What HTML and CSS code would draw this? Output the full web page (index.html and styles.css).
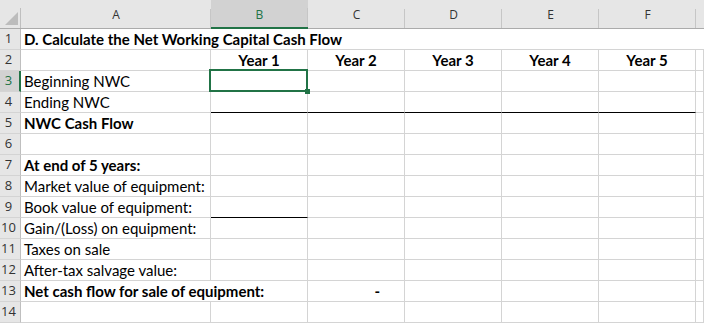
FILE: index.html
```html
<!DOCTYPE html>
<html lang="en">
<head>
    <meta charset="utf-8">
    <title>NWC Cash Flow</title>
    <link rel="stylesheet" href="styles.css">
</head>
<body>

    <div class="sheet">
        <!-- column headers -->
        <div class="hd corner">
            <svg width="13" height="13" viewBox="0 0 13 13"><polygon points="13,0 13,13 0,13" fill="#bcbcbc"/></svg>
        </div>
        <div class="hd col">A</div>
        <div class="hd col active">B</div>
        <div class="hd col">C</div>
        <div class="hd col">D</div>
        <div class="hd col">E</div>
        <div class="hd col">F</div>
        <div class="hd col last"></div>

        <!-- 1 -->
        <div class="hd row">1</div>
        <div class="c bold title">D. Calculate the Net Working Capital Cash Flow</div>

        <!-- 2 -->
        <div class="hd row">2</div>
        <div class="c"></div>
        <div class="c bold mid">Year 1</div>
        <div class="c bold mid">Year 2</div>
        <div class="c bold mid">Year 3</div>
        <div class="c bold mid">Year 4</div>
        <div class="c bold mid">Year 5</div>
        <div class="c"></div>

        <!-- 3 -->
        <div class="hd row active">3</div>
        <div class="c">Beginning NWC</div>
        <div class="c selected"></div>
        <div class="c"></div>
        <div class="c"></div>
        <div class="c"></div>
        <div class="c"></div>
        <div class="c"></div>

        <!-- 4 -->
        <div class="hd row">4</div>
        <div class="c">Ending NWC</div>
        <div class="c total"></div>
        <div class="c total"></div>
        <div class="c total"></div>
        <div class="c total"></div>
        <div class="c total"></div>
        <div class="c"></div>

        <!-- 5 -->
        <div class="hd row">5</div>
        <div class="c bold">NWC Cash Flow</div>
        <div class="c"></div>
        <div class="c"></div>
        <div class="c"></div>
        <div class="c"></div>
        <div class="c"></div>
        <div class="c"></div>

        <!-- 6 -->
        <div class="hd row">6</div>
        <div class="c"></div>
        <div class="c"></div>
        <div class="c"></div>
        <div class="c"></div>
        <div class="c"></div>
        <div class="c"></div>
        <div class="c"></div>

        <!-- 7 -->
        <div class="hd row">7</div>
        <div class="c bold">At end of 5 years:</div>
        <div class="c"></div>
        <div class="c"></div>
        <div class="c"></div>
        <div class="c"></div>
        <div class="c"></div>
        <div class="c"></div>

        <!-- 8 -->
        <div class="hd row">8</div>
        <div class="c">Market value of equipment:</div>
        <div class="c"></div>
        <div class="c"></div>
        <div class="c"></div>
        <div class="c"></div>
        <div class="c"></div>
        <div class="c"></div>

        <!-- 9 -->
        <div class="hd row">9</div>
        <div class="c">Book value of equipment:</div>
        <div class="c total"></div>
        <div class="c"></div>
        <div class="c"></div>
        <div class="c"></div>
        <div class="c"></div>
        <div class="c"></div>

        <!-- 10 -->
        <div class="hd row">10</div>
        <div class="c">Gain/(Loss) on equipment:</div>
        <div class="c"></div>
        <div class="c"></div>
        <div class="c"></div>
        <div class="c"></div>
        <div class="c"></div>
        <div class="c"></div>

        <!-- 11 -->
        <div class="hd row">11</div>
        <div class="c">Taxes on sale</div>
        <div class="c"></div>
        <div class="c"></div>
        <div class="c"></div>
        <div class="c"></div>
        <div class="c"></div>
        <div class="c"></div>

        <!-- 12 -->
        <div class="hd row">12</div>
        <div class="c">After-tax salvage value:</div>
        <div class="c"></div>
        <div class="c"></div>
        <div class="c"></div>
        <div class="c"></div>
        <div class="c"></div>
        <div class="c"></div>

        <!-- 13 -->
        <div class="hd row">13</div>
        <div class="c bold span2">Net cash flow for sale of equipment:</div>
        <div class="c bold num">-</div>
        <div class="c"></div>
        <div class="c"></div>
        <div class="c"></div>
        <div class="c"></div>

        <!-- 14 -->
        <div class="hd row">14</div>
        <div class="c"></div>
        <div class="c"></div>
        <div class="c"></div>
        <div class="c"></div>
        <div class="c"></div>
        <div class="c"></div>
        <div class="c"></div>
    </div>

</body>
</html>
```

FILE: styles.css
```css
body {
    margin: 0;
    background-color: #fff;
    overflow: hidden;
}

.sheet {
    display: grid;
    grid-template-columns: 21px 190px repeat(5, 97px) 1fr;
    grid-template-rows: 29px;
    grid-auto-rows: 21px;
    width: 704px;
    font-family: Lato, "Open Sans", sans-serif;
    font-size: 15px;
    color: #000;
}

/* headers */
.hd {
    background-color: #e6e6e6;
    color: #333;
    font-family: "Open Sans", sans-serif;
    font-size: 12px;
    box-sizing: border-box;
    display: flex;
    align-items: flex-end;
    justify-content: center;
}
.corner {
    border-bottom: 1px solid #ababab;
    background-image: linear-gradient(#bfbfbf, #bfbfbf);
    background-size: 1px 20px;
    background-position: right bottom;
    background-repeat: no-repeat;
    justify-content: flex-end;
    padding: 0 3px 3px 0;
}
.corner svg {
    display: block;
}
.col {
    border-bottom: 1px solid #ababab;
    background-image: linear-gradient(#c6c6c6, #c6c6c6);
    background-size: 1px 19px;
    background-position: right bottom;
    background-repeat: no-repeat;
    padding-bottom: 5px;
}
.col.active {
    background-color: #d2d2d2;
    color: #217346;
    border-bottom: 2px solid #217346;
    padding-bottom: 4px;
}
.col.last {
    background-image: none;
}
.row {
    border-right: 1px solid #bfbfbf;
    border-bottom: 1px solid #d4d4d4;
    padding: 0 3px 2px 0;
    font-size: 13px;
}
.row.active {
    background-color: #d2d2d2;
    color: #217346;
    border-right: 2px solid #217346;
    padding-right: 2px;
}

/* cells */
.c {
    box-sizing: border-box;
    border-right: 1px solid #d4d4d4;
    border-bottom: 1px solid #d4d4d4;
    padding: 0 3px 1px;
    white-space: nowrap;
    display: flex;
    align-items: flex-end;
    line-height: 18px;
}
.bold {
    font-weight: bold;
}
.mid {
    justify-content: center;
}
.num {
    justify-content: flex-end;
    padding-right: 24px;
}
.title {
    grid-column: 2 / -1;
    border-right: none;
}
.span2 {
    grid-column: span 2;
}
.total {
    border-bottom-color: #000;
}
.selected {
    position: relative;
}
.selected::after {
    content: "";
    position: absolute;
    top: -2px;
    left: -2px;
    right: -1px;
    bottom: -1px;
    border: 2px solid #217346;
}
.selected::before {
    content: "";
    position: absolute;
    right: -3px;
    bottom: -3px;
    width: 5px;
    height: 5px;
    background-color: #217346;
    z-index: 1;
}
```
